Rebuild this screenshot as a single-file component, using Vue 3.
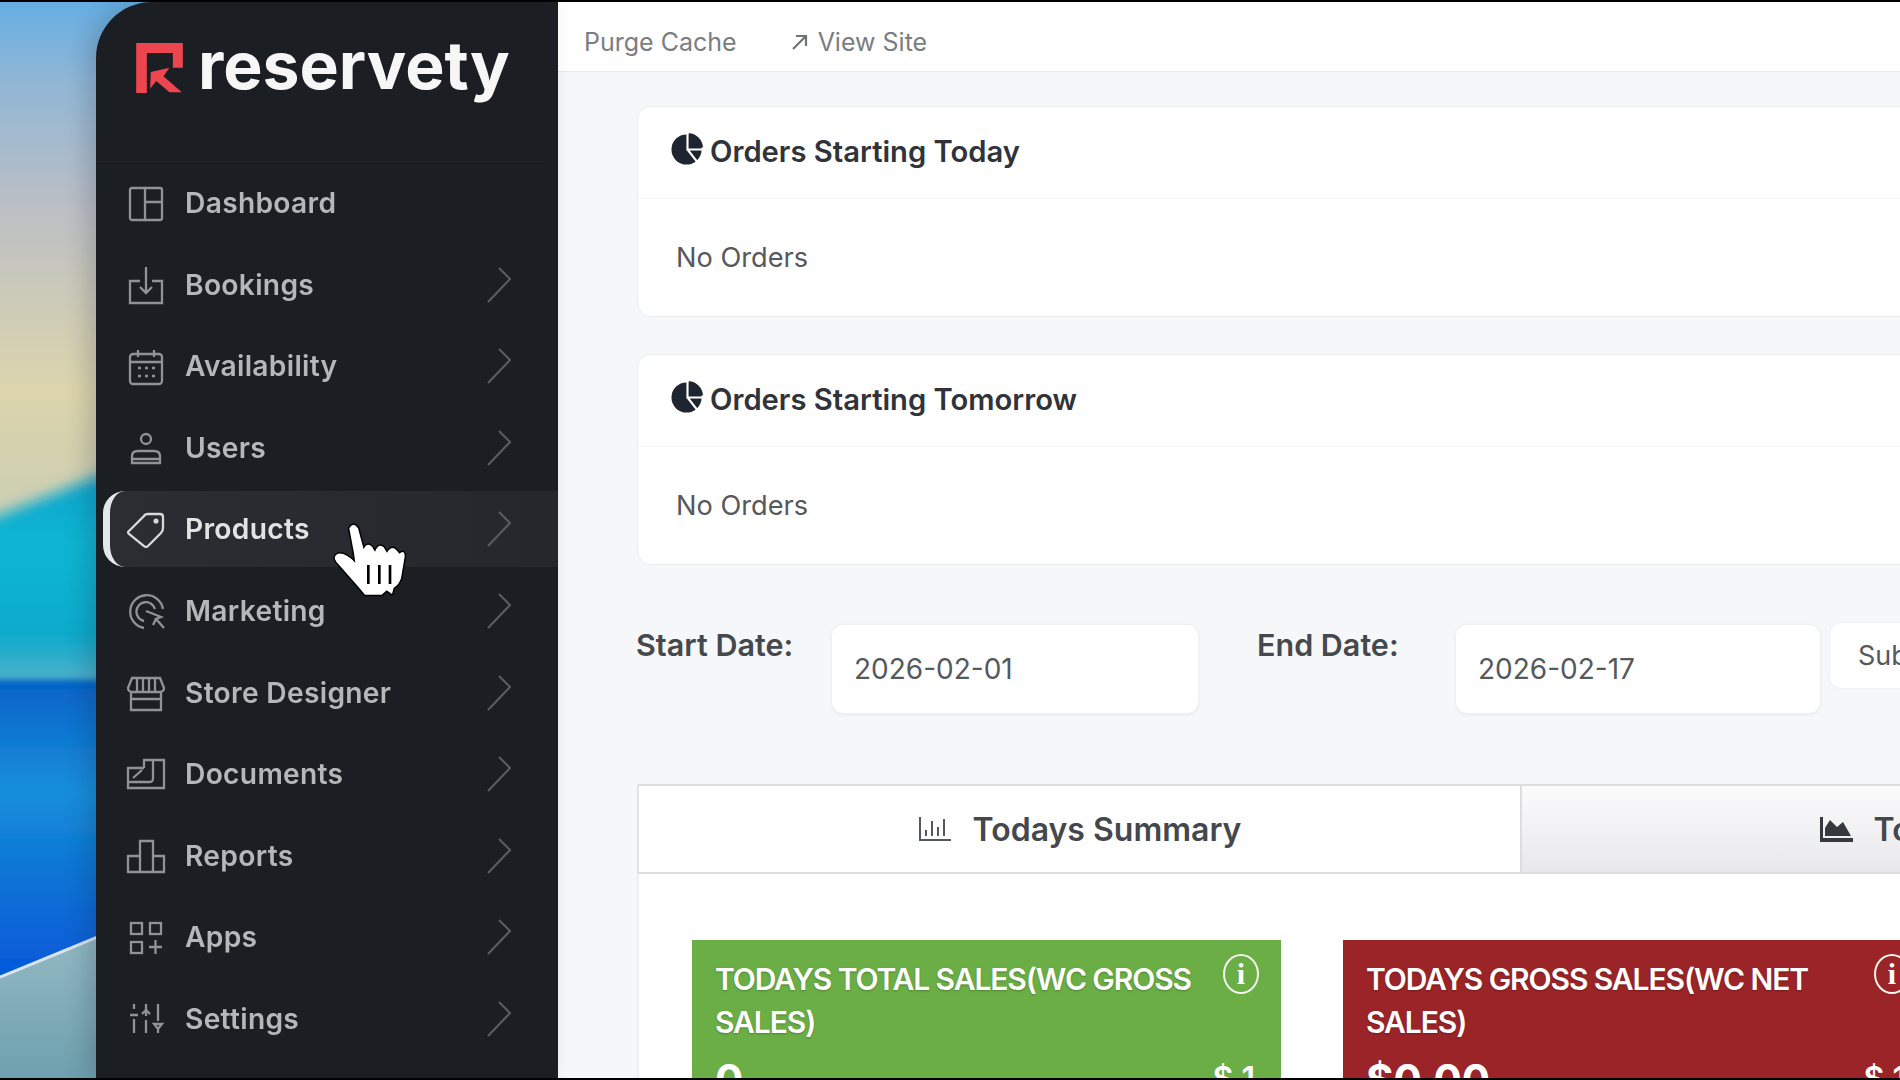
<template>
  <div class="screen">
    <!-- desktop wallpaper behind the app window -->
    <svg class="wallpaper" viewBox="0 0 200 1080" preserveAspectRatio="none">
      <defs>
        <linearGradient id="sky" x1="0" y1="0" x2="0" y2="1">
          <stop offset="0" stop-color="#65aee3" />
          <stop offset="0.14" stop-color="#8fb6d6" />
          <stop offset="0.38" stop-color="#bcbfc4" />
          <stop offset="0.72" stop-color="#dcd5ad" />
          <stop offset="1" stop-color="#c8ccb4" />
        </linearGradient>
        <linearGradient id="sea" x1="0" y1="0" x2="0" y2="1">
          <stop offset="0" stop-color="#0a93c8" />
          <stop offset="0.45" stop-color="#07b6d2" />
          <stop offset="0.8" stop-color="#10aacb" />
          <stop offset="1" stop-color="#5fb3cc" />
        </linearGradient>
        <linearGradient id="deep" x1="0" y1="0" x2="0" y2="1">
          <stop offset="0" stop-color="#0563c8" />
          <stop offset="0.35" stop-color="#1a8fdc" />
          <stop offset="0.6" stop-color="#0a74d4" />
          <stop offset="1" stop-color="#0552dc" />
        </linearGradient>
        <linearGradient id="shore" x1="0" y1="0" x2="0" y2="1">
          <stop offset="0" stop-color="#9cc0c8" />
          <stop offset="1" stop-color="#6e9fae" />
        </linearGradient>
        <filter id="haze" x="-20%" y="-20%" width="140%" height="140%">
          <feGaussianBlur stdDeviation="7" />
        </filter>
        <filter id="edge" x="-20%" y="-20%" width="140%" height="140%">
          <feGaussianBlur stdDeviation="3" />
        </filter>
      </defs>
      <rect x="0" y="0" width="200" height="540" fill="url(#sky)" />
      <polygon points="-40,529 96,475 240,418 240,690 -40,690" fill="url(#sea)" filter="url(#haze)" />
      <polygon points="-20,678 220,678 220,910 -20,1000" fill="url(#deep)" filter="url(#edge)" />
      <polygon points="0,975 200,893 200,1080 0,1080" fill="url(#shore)" />
      <line x1="0" y1="975" x2="200" y2="893" stroke="#dbe4f6" stroke-width="3" />
    </svg>

    <aside class="sidebar">
      <div class="brand">
        <svg class="brand-mark" viewBox="48 68 140 150">
          <path d="M48 68H188V142H158V98H80V218H48Z" />
          <path d="M92 155L148 142L130 168L185 216H148L108 182L90 205Z" />
        </svg>
        <span class="brand-name">reservety</span>
      </div>
      <nav class="nav">
        <a
          v-for="item in navItems"
          :key="item.label"
          class="nav-row"
          :class="{ active: item.label === 'Products' }"
        >
          <svg class="nav-icon" viewBox="0 0 32 32" v-html="item.icon"></svg>
          <span class="nav-label">{{ item.label }}</span>
          <svg v-if="item.label !== 'Dashboard'" class="nav-chevron" viewBox="0 0 24 36">
            <path d="M12 1L23 12L1 35" />
          </svg>
        </a>
      </nav>
    </aside>

    <main class="main">
      <header class="topbar">
        <span>Purge Cache</span>
        <span class="view-site">
          <svg viewBox="0 0 18 18"><path d="M2 16L15 3M5 3H15V13" /></svg>
          View Site
        </span>
      </header>

      <div class="content">
        <section v-for="title in orderCards" :key="title" class="order-card">
          <h3 class="order-head">
            <svg class="pie" viewBox="0 0 34 34">
              <circle cx="16" cy="17" r="15.5" fill="#1f2530" />
              <path d="M18 0A16 16 0 0 1 33 15H18Z" fill="#1f2530" />
              <path d="M17 0V17H34M17 17L28 31" stroke="#fff" stroke-width="2.2" fill="none" />
            </svg>
            {{ title }}
          </h3>
          <div class="order-body">No Orders</div>
        </section>

        <div class="date-row">
          <label class="date-label start">Start Date:</label>
          <div class="date-input start">2026-02-01</div>
          <label class="date-label end">End Date:</label>
          <div class="date-input end">2026-02-17</div>
          <button class="submit">Submit</button>
        </div>

        <div class="tabs">
          <div class="tab current">
            <svg viewBox="0 0 34 26" class="tab-icon line">
              <path d="M2 1V24H33M8 20V14M14 20V5M20 20V11M26 20V3" />
            </svg>
            Todays Summary
          </div>
          <div class="tab other">
            <svg viewBox="0 0 34 26" class="tab-icon fill">
              <path d="M1 1H4V22H34V26H1ZM6 20V12L11 4L18 11L24 6L32 20Z" />
            </svg>
            Total Summary
          </div>
        </div>

        <div class="panel">
          <article v-for="stat in stats" :key="stat.title" class="stat" :class="stat.tone">
            <div class="stat-top">
              <p class="stat-title">{{ stat.title }}<br />SALES)</p>
              <span class="info">i</span>
            </div>
            <div class="stat-values">
              <span class="stat-value">{{ stat.value }}</span>
              <span class="stat-side">$ 1</span>
            </div>
          </article>
        </div>
      </div>
    </main>

    <!-- pointer hovering the Products row -->
    <svg class="hand" viewBox="0 0 270 300">
      <path d="M58 55Q70 34 84 55L101 118Q111 96 126 110L135 125Q146 98 161 112L171 128Q186 104 201 122L208 131Q224 118 224 140L213 205Q206 226 191 233L186 252L170 241L155 254L105 254L90 236Q55 196 19 155Q7 139 25 131Q46 128 76 158L72 130Z" />
      <path class="bars" d="M115 165V222M148 165V222M180 165V222" />
    </svg>
  </div>
</template>

<script setup>
const navItems = [
  {
    label: 'Dashboard',
    icon: '<rect x="0" y="1" width="32" height="32" rx="2"/><path d="M15 1V33M15 15H32"/>',
  },
  {
    label: 'Bookings',
    icon: '<path d="M10 12H0V34H32V12H22M16 -2V24M10 18L16 24L22 18"/>',
  },
  {
    label: 'Availability',
    icon: '<rect x="0" y="4" width="32" height="30" rx="3"/><path d="M0 12H32M8 0V7M24 0V7M8 18H11M15 18H18M22 18H25M8 26H11M15 26H18M22 26H25"/>',
  },
  {
    label: 'Users',
    icon: '<circle cx="16" cy="7" r="5"/><path d="M2 27V24Q2 19 8 19H24Q30 19 30 24V27M2 27H30V31H2Z"/>',
  },
  {
    label: 'Products',
    icon: '<path d="M-1 18L14 3Q15 1 18 1H30Q33 1 33 4V15Q33 18 31 20L18 33Q16 35 14 33L-1 21Q-3 19 -1 18Z"/><circle cx="26" cy="8" r="1.4" fill="currentColor"/>',
  },
  {
    label: 'Marketing',
    icon: '<path d="M14 33A16.5 16.5 0 1 1 33 14M14 26A9.5 9.5 0 1 1 25 14"/><path d="M16 16L31 22L26 24L34 33M26 24L23 30Z"/>',
  },
  {
    label: 'Store Designer',
    icon: '<path d="M2 1H30L34 11Q34 15 29 15H3Q-2 15 -2 11ZM7 2V14M13 2V14M19 2V14M25 2V14M1 15V33H31V15M1 22H31"/>',
  },
  {
    label: 'Documents',
    icon: '<path d="M14 10V2H34V30H-2V10H14M-2 24H20Q23 24 23 20V2M3 20L12 12"/>',
  },
  {
    label: 'Reports',
    icon: '<path d="M-2 16H10V32H-2ZM10 1H23V32H10ZM23 16H34V32H23Z"/>',
  },
  {
    label: 'Apps',
    icon: '<rect x="1" y="2" width="11" height="11"/><rect x="20" y="2" width="11" height="11"/><rect x="1" y="21" width="11" height="11"/><path d="M25.5 19V33M19 26H32"/>',
  },
  {
    label: 'Settings',
    icon: '<path d="M4 1V6M0 12H8M4 16V30M16 1V13M12 11L16 7L20 11M16 17V30M28 1V18M24 21H32L28 26ZM28 26V30"/>',
  },
]

const orderCards = ['Orders Starting Today', 'Orders Starting Tomorrow']

const stats = [
  { title: 'TODAYS TOTAL SALES(WC GROSS', value: '0', tone: 'green' },
  { title: 'TODAYS GROSS SALES(WC NET', value: '$0.00', tone: 'red' },
]
</script>

<style>
html,
body {
  margin: 0;
  background: #000;
  overflow: hidden;
}
</style>

<style scoped>
.screen {
  position: relative;
  display: flex;
  box-sizing: border-box;
  width: 1900px;
  height: 1080px;
  padding-left: 96px;
  overflow: hidden;
  border-top: 2px solid #000;
  border-bottom: 2px solid #000;
  font-family: Inter, 'Noto Sans', sans-serif;
  filter: blur(0.6px);
}

.wallpaper {
  position: absolute;
  top: 0;
  left: 0;
  width: 200px;
  height: 1080px;
}

.sidebar {
  position: relative;
  flex: 0 0 462px;
  background: #1b1e23;
  border-top-left-radius: 56px;
  box-shadow: -10px 0 22px rgba(20, 30, 50, 0.18);
}

.brand {
  display: flex;
  align-items: center;
  gap: 15px;
  box-sizing: border-box;
  height: 160px;
  padding: 0 0 28px 40px;
  margin-right: 14px;
  border-bottom: 1px solid #20242a;
}

.brand-mark {
  flex: none;
  width: 47px;
  height: 50px;
  fill: #ee4650;
}

.brand-name {
  margin-top: -5px;
  font-size: 66px;
  font-weight: 700;
  color: #f6f6f6;
  line-height: 1;
}

.nav {
  display: flex;
  flex-direction: column;
  gap: 5.6px;
  padding: 3px 0 0 7px;
}

.nav-row {
  display: flex;
  align-items: center;
  box-sizing: border-box;
  height: 76px;
  padding-left: 20px;
  border-left: 7px solid transparent;
  color: #909295;
}

.nav-row.active {
  background: linear-gradient(90deg, #2a2e32, #24282c);
  border-left-color: #e6e7e7;
  border-radius: 22px 0 0 22px;
  color: #d8d9da;
}

.nav-icon {
  flex: none;
  width: 32px;
  height: 32px;
  overflow: visible;
  fill: none;
  stroke: currentColor;
  stroke-width: 2.3;
}

.nav-label {
  margin-left: 23px;
  font-size: 28.2px;
  font-weight: 600;
  letter-spacing: 0.3px;
  color: #b5b7b9;
}

.active .nav-label {
  color: #e2e3e3;
}

.nav-chevron {
  width: 24px;
  height: 36px;
  margin-left: auto;
  margin-right: 47px;
  fill: none;
  stroke: #5b5d60;
  stroke-width: 2;
}

.main {
  flex: 1;
  min-width: 0;
  overflow: hidden;
  background: #f6f7f9;
}

.topbar {
  display: flex;
  align-items: center;
  gap: 54px;
  box-sizing: border-box;
  height: 70px;
  padding: 10px 0 0 26px;
  background: #fff;
  border-bottom: 1px solid #e9eaec;
  font-size: 25px;
  color: #7a7d82;
}

.view-site {
  display: flex;
  align-items: center;
  gap: 9px;
}

.view-site svg {
  width: 18px;
  height: 18px;
  fill: none;
  stroke: #6f7278;
  stroke-width: 2.2;
}

.content {
  padding: 34px 0 0 79px;
}

.order-card {
  margin: 0 -30px 37px 0;
  background: #fff;
  border: 1px solid #ebecee;
  border-radius: 14px;
}

.order-head {
  display: flex;
  align-items: center;
  gap: 6px;
  box-sizing: border-box;
  height: 92px;
  margin: 0;
  padding: 0 0 2px 33px;
  border-bottom: 1px solid #f5f5f6;
  font-size: 29.2px;
  font-weight: 600;
  color: #30333a;
}

.pie {
  width: 33px;
  height: 33px;
  margin-top: -4px;
}

.order-body {
  display: flex;
  align-items: center;
  height: 117px;
  padding-left: 38px;
  font-size: 27.2px;
  color: #55585c;
}

.date-row {
  display: flex;
  align-items: flex-start;
  height: 90px;
  margin-top: 59px;
}

.date-label {
  flex: none;
  padding-top: 5px;
  font-size: 30.5px;
  font-weight: 600;
  line-height: 32px;
  color: #45484d;
}

.date-label.start {
  width: 195px;
  margin-left: -1px;
}

.date-label.end {
  width: 198px;
  margin-left: 58px;
}

.date-input {
  flex: none;
  display: flex;
  align-items: center;
  box-sizing: border-box;
  height: 90px;
  padding-left: 22px;
  background: #fff;
  border: 1px solid #f0f0f2;
  border-radius: 12px;
  box-shadow: 0 1px 3px rgba(0, 0, 0, 0.06);
  font-size: 28px;
  color: #55585c;
}

.date-input.start {
  width: 368px;
}

.date-input.end {
  width: 366px;
}

.submit {
  flex: none;
  width: 140px;
  height: 67px;
  margin: -2px 0 0 8px;
  padding: 0 0 0 28px;
  text-align: left;
  background: #fff;
  border: 1px solid #f0f0f2;
  border-radius: 12px;
  font: inherit;
  font-size: 27px;
  color: #55585c;
}

.tabs {
  display: flex;
  height: 86px;
  margin: 70px -300px 0 0;
  border-top: 2px solid #dcdddf;
  border-bottom: 2px solid #dcdddf;
  border-left: 2px solid #e2e3e5;
}

.tab {
  flex: 0 0 881px;
  display: flex;
  align-items: center;
  justify-content: center;
  gap: 21px;
  font-size: 32px;
  font-weight: 600;
  color: #44474c;
  white-space: nowrap;
}

.tab.current {
  background: #fff;
}

.tab.other {
  border-left: 2px solid #dcdddf;
  background: linear-gradient(#fbfbfc, #e8e8ea);
}

.tab-icon {
  width: 34px;
  height: 26px;
}

.tab-icon.line {
  fill: none;
  stroke: #55585c;
  stroke-width: 2;
}

.tab-icon.fill {
  fill: #35383d;
}

.panel {
  display: flex;
  gap: 62px;
  margin-right: -60px;
  height: 400px;
  padding: 66px 0 0 53px;
  background: #fff;
  border-left: 2px solid #eeeff0;
}

.stat {
  flex: 0 0 589px;
  box-sizing: border-box;
  padding: 18px 22px 0 23px;
  color: #fff;
}

.stat.green {
  background: #6aae45;
}

.stat.red {
  background: #9b2428;
}

.stat-top {
  display: flex;
  justify-content: space-between;
}

.stat-title {
  margin: 0;
  font-size: 30px;
  font-weight: 600;
  line-height: 43px;
  letter-spacing: -1.1px;
  white-space: nowrap;
  text-shadow: 0 1px 2px rgba(0, 0, 0, 0.25);
}

.info {
  flex: none;
  display: flex;
  align-items: center;
  justify-content: center;
  box-sizing: border-box;
  width: 36px;
  height: 40px;
  margin-top: -4px;
  border: 2px solid #f1f5ec;
  border-radius: 50%;
  font-family: 'Liberation Serif', serif;
  font-size: 30px;
  font-weight: 700;
}

.stat-values {
  display: flex;
  justify-content: space-between;
  align-items: flex-start;
  margin-top: 11px;
}

.stat-value {
  font-size: 42px;
  font-weight: 700;
  line-height: 50px;
}

.stat-side {
  margin: 4px 4px 0 0;
  font-size: 32px;
  font-weight: 600;
  line-height: 40px;
}

.hand {
  position: absolute;
  top: 508px;
  left: 330px;
  width: 90px;
  height: 100px;
  fill: #fff;
  stroke: #000;
  stroke-width: 9;
  stroke-linejoin: round;
  paint-order: stroke;
}

.hand .bars {
  fill: none;
  stroke-width: 8;
}
</style>
